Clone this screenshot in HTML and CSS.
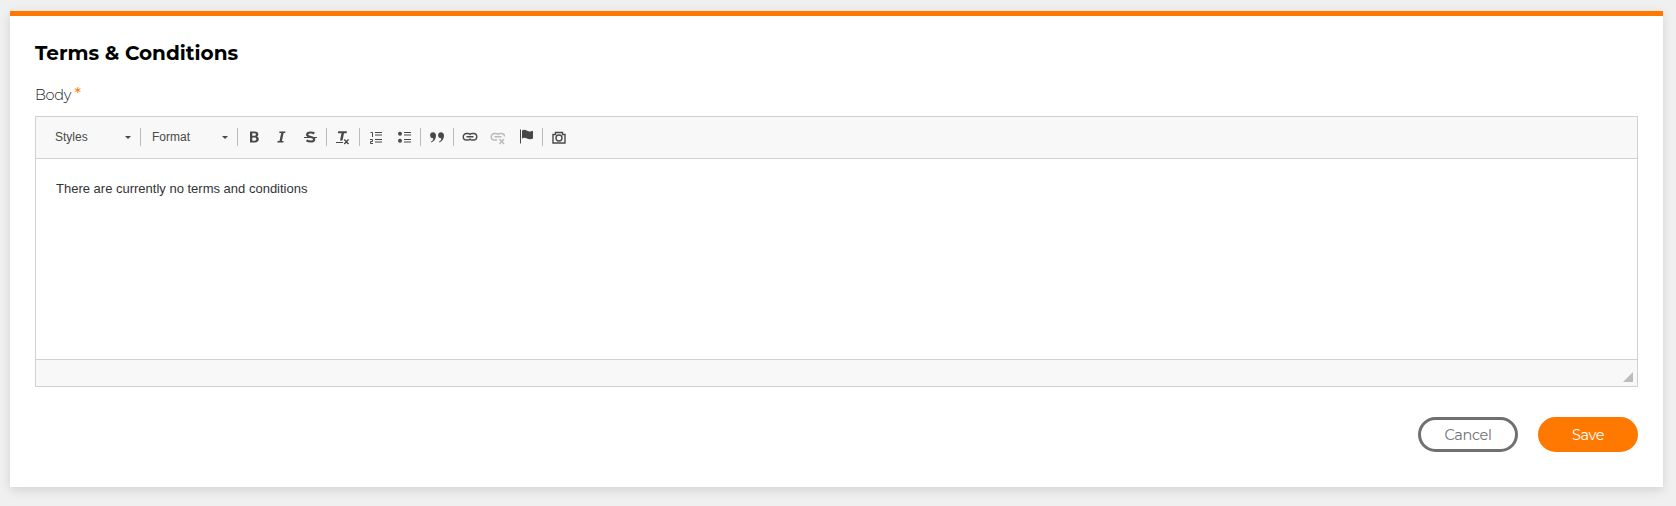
FILE: index.html
```
<!DOCTYPE html>
<html lang="en">
<head>
<meta charset="utf-8">
<title>Terms &amp; Conditions</title>
<link rel="stylesheet" href="styles.css">
</head>
<body>
<main class="card">
  <h1 class="title">Terms &amp; Conditions</h1>
  <label class="label">Body <span class="required">*</span></label>
  <section class="editor">
    <div class="toolbar">
      <div class="combo">Styles<i class="caret"></i></div>
      <i class="sep"></i>
      <div class="combo">Format<i class="caret"></i></div>
      <i class="sep"></i>
      <span class="tool"><svg viewBox="0 0 16 16"><path class="fill" fill-rule="evenodd" d="M4 2.500h4.600c2.400 0 3.700 .9 3.700 2.700 0 1.200-.6 2-1.500 2.300 1.300.3 2 1.200 2 2.600 0 2.100-1.500 3.400-4 3.400H4zM6.300 4.200v2.600h2c1 0 1.600-.4 1.600-1.300s-.6-1.300-1.600-1.300zM6.300 8.500v3.200h2.200c1.200 0 1.800-.6 1.800-1.600S9.600 8.500 8.500 8.500z"/></svg></span>
      <span class="tool"><svg viewBox="0 0 16 16"><path class="fill" d="M5.500 2.500H11.500l-.3 1.500H9.600L7.900 12h1.700L9.300 13.500H3.300l.3-1.500h1.900L7.200 4H5.200z"/></svg></span>
      <span class="tool"><svg viewBox="0 0 16 16"><path class="line bold" d="M12.300 4.500C11.200 3.700 9.800 3.500 8.600 3.500 6.400 3.500 5.100 4.400 5.100 5.800 5.100 8.800 12.200 7.300 12.200 10.200 12.200 11.800 10.700 12.500 8.600 12.500 7 12.500 5.700 12.100 4.500 11.300"/><path class="line" d="M2 8.500h13"/></svg></span>
      <i class="sep"></i>
      <span class="tool"><svg viewBox="0 0 16 16"><path class="fill" d="M3.300 2.200H12l-.5 2H9L7.500 11.500H5L6.500 4.200H2.800z"/><path class="line" d="M1 13.500h7"/><path class="line mid" d="M9.300 10.600l4.200 4.500M13.500 10.600l-4.200 4.500"/></svg></span>
      <i class="sep"></i>
      <span class="tool"><svg viewBox="0 0 16 16"><path class="line" d="M7 3.500h7M7 6h7M7 10.500h7M7 13h7M2.500 3.500h2V8M2 10.500h2.500v2h-2v2H5"/></svg></span>
      <span class="tool"><svg viewBox="0 0 16 16"><circle class="fill" cx="4" cy="4.800" r="2"/><circle class="fill" cx="4" cy="11.700" r="2"/><path class="line" d="M8 3.500h7M8 6h7M8 10.500h7M8 13h7"/></svg></span>
      <i class="sep"></i>
      <span class="tool"><svg viewBox="0 0 16 16"><path class="fill" d="M4 3.200c1.800 0 3 1.300 3 3.200 0 3-1.700 5.800-4.600 7l-.4-.6c1.600-1.100 2.300-2.200 2.400-3.600C2.500 9.400 1.100 8.200 1.100 6.200 1.100 4.500 2.300 3.200 4 3.200zM12 3.200c1.800 0 3 1.300 3 3.200 0 3-1.700 5.800-4.600 7l-.4-.6c1.600-1.100 2.300-2.200 2.400-3.600-1.900.2-3.300-1-3.300-3C9.100 4.500 10.300 3.200 12 3.200z"/></svg></span>
      <i class="sep"></i>
      <span class="tool"><svg viewBox="0 0 16 16"><path class="line mid" d="M8.500 5.800C8 5 7 4.500 6 4.500H4.500a3 3 0 0 0 0 6.500H6c1 0 2-.5 2.500-1.300M7.500 5.800C8 5 9 4.500 10 4.500h1.500a3 3 0 0 1 0 6.500H10c-1 0-2-.5-2.500-1.300M4.500 7.750h7"/></svg></span>
      <span class="tool disabled"><svg viewBox="0 0 16 16"><path class="line mid" d="M8.500 5.800C8 5 7 4.500 6 4.500H4.500a3 3 0 0 0 0 6.500H7M7.500 5.800C8 5 9 4.500 10 4.500h1.500c1.800 0 3 1.300 3 3M4.500 7.750h7"/><path class="line mid" d="M9.500 10l4.500 5M14 10l-4.500 5"/></svg></span>
      <span class="tool"><svg viewBox="0 0 16 16"><path class="line" d="M2.500 .5v14"/><path class="fill" d="M4 1.400C6 .5 7.500.8 9 1.700c2 1.100 4 1 6 .1V9.500c-2 1-4 1-6 .1-1.700-.9-3.200-1-5-.1z"/></svg></span>
      <i class="sep"></i>
      <span class="tool"><svg viewBox="0 0 16 16"><path class="line mid" d="M2 5.500h2.500v-2h7v2H14v8.500H2z"/><circle class="line mid" cx="8" cy="9" r="3"/></svg></span>
    </div>
    <div class="content">There are currently no terms and conditions</div>
    <div class="footer"><svg class="grip" viewBox="0 0 10 10"><path d="M10 0v10H0z"/></svg></div>
  </section>
  <div class="actions">
    <button class="btn cancel">Cancel</button>
    <button class="btn save">Save</button>
  </div>
</main>
</body>
</html>
```
FILE: styles.css
```
* { box-sizing: border-box; }
body { margin: 0; height: 506px; padding: 11px 13px 0 10px; background: #f0f0f0; overflow: hidden; font-family: "Liberation Sans", Arial, sans-serif; }
.card { height: 476px; padding: 25px 25px 0; border-top: 5px solid #ff7900; background: #fff; box-shadow: 0 3px 10px rgba(0,0,0,.13); }
.title { margin: 0; height: 24px; font: 700 20px/24px Montserrat, Inter, sans-serif; color: #000; white-space: nowrap; }
.label { display: block; height: 20px; margin: 20px 0 11px; font: 300 14.500px/20px Montserrat, Inter, sans-serif; letter-spacing: -.3px; color: #101722; }
.required { color: #ff7900; font-weight: 400; font-size: 17px; line-height: 1; }
.editor { height: 271px; display: flex; flex-direction: column; border: 1px solid #d1d1d1; }
.toolbar { height: 42px; display: flex; align-items: center; padding: 0 0 1px 10px; background: #f8f8f8; border-bottom: 1px solid #d1d1d1; }
.combo { width: 92px; padding: 0 7px 0 9px; display: flex; align-items: center; justify-content: space-between; font-size: 12px; line-height: 18px; color: #484848; }
.caret { border: 3px solid transparent; border-top-color: #484848; border-bottom: 0; }
.sep { width: 1px; height: 18px; margin: 0 2px; background: #bcbcbc; }
.tool { width: 28px; height: 16px; padding: 0 6px; color: #484848; }
.tool svg { display: block; width: 16px; height: 16px; overflow: visible; }
.disabled { opacity: .35; }
.fill { fill: currentColor; }
.line { fill: none; stroke: currentColor; stroke-width: 1; }
.mid { stroke-width: 1.400; }
.bold { stroke-width: 2.200; }
.content { flex: 1; padding: 19px 20px; font-size: 13px; line-height: 21px; color: #333; }
.footer { height: 27px; display: flex; justify-content: flex-end; align-items: flex-end; padding: 0 4px 4px 0; background: #f8f8f8; border-top: 1px solid #d1d1d1; }
.grip { width: 10px; height: 10px; fill: #bcbcbc; }
.actions { display: flex; justify-content: flex-end; gap: 20px; margin-top: 30px; }
.btn { width: 100px; height: 35px; padding: 1px 0 0; border: 3px solid #707070; border-radius: 18px; background: #fff; color: #707070; font: 400 14.500px/28px Montserrat, Inter, sans-serif; letter-spacing: -.4px; }
.save { background: #ff7900; border-color: #ff7900; color: #fff; }
```
